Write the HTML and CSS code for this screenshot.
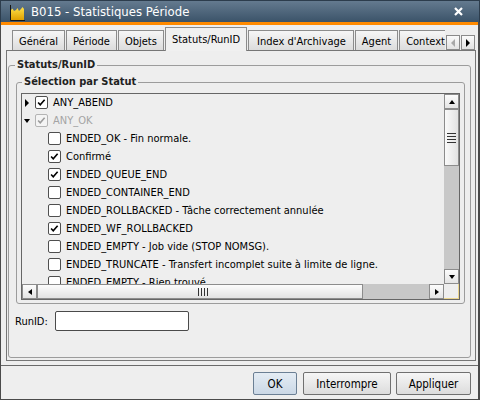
FILE: index.html
```html
<!DOCTYPE html>
<html lang="fr">
<head>
<meta charset="utf-8">
<title>B015 - Statistiques Période</title>
<link rel="stylesheet" href="styles.css">
</head>
<body>
<div class="window">
  <div class="titlebar">
    <svg class="app-icon" width="16" height="17" viewBox="0 0 16 17">
      <defs>
        <linearGradient id="gold" x1="0" y1="0" x2="0" y2="1">
          <stop offset="0" stop-color="#ffe14a"/>
          <stop offset="1" stop-color="#e0a000"/>
        </linearGradient>
      </defs>
      <path d="M2 16 L2 6 L3.5 4.5 L5 7 L7 6 L8.5 4 L10 7 L12 5 L13.5 3 L15 5 L15 16 Z" fill="url(#gold)"/>
      <path d="M1.5 1 V16.5 H16" stroke="#151515" stroke-width="1" fill="none"/>
    </svg>
    <span class="title">B015 - Statistiques Période</span>
    <svg class="close" width="9" height="9" viewBox="0 0 9 9">
      <path d="M1 1 L8 8 M8 1 L1 8" stroke="#ffffff" stroke-width="2.2"/>
    </svg>
  </div>
  <div class="frame">
    <div class="accent"></div>
    <div class="content">
      <div class="tabs">
        <div class="tab-strip">
          <div class="tab">Général</div>
          <div class="tab">Période</div>
          <div class="tab">Objets</div>
          <div class="tab active">Statuts/RunID</div>
          <div class="tab wide">Index d'Archivage</div>
          <div class="tab">Agent</div>
          <div class="tab">Contexte</div>
        </div>
        <div class="tab-arrows">
          <div class="arrow-btn"><span class="tri-left disabled"></span></div>
          <div class="arrow-btn"><span class="tri-right"></span></div>
        </div>
      </div>
      <div class="panel">
        <fieldset class="group outer">
          <legend>Statuts/RunID</legend>
          <fieldset class="group inner">
            <legend>Sélection par Statut</legend>
            <div class="listbox">
              <div class="viewport">
                <div class="row l1"><span class="toggle"><span class="tri-right"></span></span><span class="cb checked"><svg viewBox="0 0 13 13"><path d="M2.5 6.5 L5 9.2 L10.2 3.2"/></svg></span><span class="lbl">ANY_ABEND</span></div>
                <div class="row l1 disabled"><span class="toggle"><span class="tri-down"></span></span><span class="cb checked"><svg viewBox="0 0 13 13"><path d="M2.5 6.5 L5 9.2 L10.2 3.2"/></svg></span><span class="lbl">ANY_OK</span></div>
                <div class="row l2"><span class="cb"></span><span class="lbl">ENDED_OK - Fin normale.</span></div>
                <div class="row l2"><span class="cb checked"><svg viewBox="0 0 13 13"><path d="M2.5 6.5 L5 9.2 L10.2 3.2"/></svg></span><span class="lbl">Confirmé</span></div>
                <div class="row l2"><span class="cb checked"><svg viewBox="0 0 13 13"><path d="M2.5 6.5 L5 9.2 L10.2 3.2"/></svg></span><span class="lbl">ENDED_QUEUE_END</span></div>
                <div class="row l2"><span class="cb"></span><span class="lbl">ENDED_CONTAINER_END</span></div>
                <div class="row l2"><span class="cb"></span><span class="lbl">ENDED_ROLLBACKED - Tâche correctement annulée</span></div>
                <div class="row l2"><span class="cb checked"><svg viewBox="0 0 13 13"><path d="M2.5 6.5 L5 9.2 L10.2 3.2"/></svg></span><span class="lbl">ENDED_WF_ROLLBACKED</span></div>
                <div class="row l2"><span class="cb"></span><span class="lbl">ENDED_EMPTY - Job vide (STOP NOMSG).</span></div>
                <div class="row l2"><span class="cb"></span><span class="lbl">ENDED_TRUNCATE - Transfert incomplet suite à limite de ligne.</span></div>
                <div class="row l2"><span class="cb"></span><span class="lbl">ENDED_EMPTY - Rien trouvé</span></div>
                <div class="row l2"><span class="cb"></span><span class="lbl">ENDED_WARNING</span></div>
              </div>
              <div class="vscroll">
                <div class="sb-btn"><span class="tri-up"></span></div>
                <div class="vthumb"><span class="grip-h"></span></div>
                <div class="track"></div>
                <div class="sb-btn"><span class="tri-down-sm"></span></div>
              </div>
              <div class="hscroll">
                <div class="sb-btn"><span class="tri-left-sm"></span></div>
                <div class="hthumb"><span class="grip-v"></span></div>
                <div class="track"></div>
                <div class="sb-btn"><span class="tri-right-sm"></span></div>
              </div>
              <div class="corner"></div>
            </div>
          </fieldset>
          <div class="runid-row">
            <label class="runid-label" for="runid">RunID:</label>
            <input class="runid-input" id="runid" type="text">
          </div>
        </fieldset>
      </div>
      <div class="separator"></div>
      <div class="buttons">
        <button class="btn default btn-ok">OK</button>
        <button class="btn btn-cancel">Interrompre</button>
        <button class="btn btn-apply">Appliquer</button>
      </div>
    </div>
  </div>
</div>
</body>
</html>
```
FILE: styles.css
```css
* { box-sizing: border-box; }
html, body { margin: 0; padding: 0; }
body {
  width: 480px;
  height: 400px;
  overflow: hidden;
  background: #eeeeee;
  font-family: "DejaVu Sans Condensed", "DejaVu Sans", sans-serif;
  font-size: 11px;
  color: #000;
}
.window {
  width: 480px;
  height: 400px;
  display: flex;
  flex-direction: column;
  background: #eeeeee;
}
.titlebar {
  height: 22px;
  flex: none;
  display: flex;
  align-items: center;
  background: linear-gradient(#647a8f, #3b5369);
  border: 1px solid #2c3c4c;
  border-bottom: none;
  color: #fff;
  padding: 0 16px 0 8px;
}
.app-icon { margin-right: 6px; margin-top: 1px; }
.title { flex: 1; font-size: 13px; }
.close { flex: none; }
.frame {
  flex: 1;
  display: flex;
  flex-direction: column;
  border: 1px solid #4a4a4a;
  border-right-width: 2px;
  border-top: none;
}
.accent { height: 3px; flex: none; background: #ff8a00; }
.content {
  flex: 1;
  padding: 2px 2px 0 5px;
  display: flex;
  flex-direction: column;
}
/* tabs */
.tabs {
  height: 24px;
  flex: none;
  display: flex;
  align-items: flex-end;
  padding-left: 6px;
  background: linear-gradient(to top, #767676 1px, transparent 1px);
}
.tab-strip {
  width: 433px;
  height: 24px;
  display: flex;
  align-items: flex-start;
  overflow: hidden;
  flex: none;
}
.tab {
  flex: none;
  height: 20px;
  margin-top: 3px;
  margin-right: 1px;
  padding: 1px 6px 0;
  border: 1px solid #8c8c8c;
  border-bottom: none;
  background: linear-gradient(#f6f6f6, #dcdcdc);
  display: flex;
  align-items: center;
  white-space: nowrap;
}
.tab.wide { padding: 1px 7px 0 8px; }
.tab.active {
  height: 24px;
  margin-top: 0;
  background: #f0f0f0;
  padding-top: 0;
}
.tab-arrows {
  display: flex;
  gap: 1px;
  margin-left: 1px;
  margin-bottom: 1px;
}
.arrow-btn {
  width: 14px;
  height: 15px;
  border: 1px solid #8a8a8a;
  background: linear-gradient(#fafafa, #e2e2e2);
  display: flex;
  align-items: center;
  justify-content: center;
}
.tri-left { width: 0; height: 0; border-right: 4px solid #000; border-top: 4px solid transparent; border-bottom: 4px solid transparent; }
.tri-left.disabled { border-right-color: #a8a8a8; }
.tri-right { width: 0; height: 0; border-left: 4px solid #000; border-top: 4px solid transparent; border-bottom: 4px solid transparent; }
.tri-down { width: 0; height: 0; border-top: 4px solid #000; border-left: 3.5px solid transparent; border-right: 3.5px solid transparent; }
.tri-up { width: 0; height: 0; border-bottom: 4px solid #000; border-left: 3.5px solid transparent; border-right: 3.5px solid transparent; }
.tri-down-sm { width: 0; height: 0; border-top: 4px solid #000; border-left: 3.5px solid transparent; border-right: 3.5px solid transparent; }
.tri-left-sm { width: 0; height: 0; border-right: 4px solid #000; border-top: 3.5px solid transparent; border-bottom: 3.5px solid transparent; }
.tri-right-sm { width: 0; height: 0; border-left: 4px solid #000; border-top: 3.5px solid transparent; border-bottom: 3.5px solid transparent; }

/* panel */
.panel {
  flex: none;
  height: 310px;
  border: 1px solid #767676;
  border-top: none;
  padding: 7px 4px 2px 1px;
  display: flex;
  flex-direction: column;
}
.group {
  margin: 0;
  border: 1px solid #9c9c9c;
  border-radius: 3px;
  min-width: 0;
}
.group legend {
  font-weight: bold;
  font-size: 11px;
  line-height: 14px;
  padding: 0 2px;
  color: #222;
}
.outer {
  flex: 1;
  padding: 3px 5px 0 7px;
}
.outer > legend { margin-left: -1px; }
.inner {
  padding: 4px 4px 3px 4px;
}
.inner > legend { margin-left: 1px; }

/* listbox */
.listbox {
  height: 207px;
  border: 1px solid #666666;
  display: grid;
  grid-template-columns: 1fr 15px;
  grid-template-rows: 1fr 15px;
  background: #eeeeee;
}
.viewport {
  overflow: hidden;
  padding-top: 1px;
  min-width: 0;
}
.row {
  height: 18px;
  display: flex;
  align-items: center;
  white-space: nowrap;
  padding-bottom: 3px;
}
.row.l1 { padding-left: 2px; }
.row.l2 { padding-left: 26px; }
.toggle {
  width: 11px;
  height: 13px;
  display: flex;
  align-items: center;
  justify-content: flex-start;
  padding-left: 1px;
}
.row.disabled .toggle { padding-left: 0; }
.cb {
  width: 13px;
  height: 13px;
  flex: none;
  border: 1px solid #4f4f4f;
  border-radius: 2px;
  background: #ffffff;
  margin-right: 5px;
  display: flex;
}
.cb svg { width: 11px; height: 11px; }
.cb path { fill: none; stroke: #000; stroke-width: 1.9; }
.lbl { line-height: 13px; }
.row.disabled .cb { border-color: #b4b4b4; background: #f4f4f4; }
.row.disabled .cb path { stroke: #9c9c9c; }
.row.disabled .lbl { color: #a4a4a4; }

.vscroll {
  display: flex;
  flex-direction: column;
  background: #c8c8c8;
}
.hscroll {
  display: flex;
  background: #c8c8c8;
}
.sb-btn {
  width: 15px;
  height: 15px;
  flex: none;
  border: 1px solid #8c8c8c;
  background: linear-gradient(#fcfcfc, #e4e4e4);
  display: flex;
  align-items: center;
  justify-content: center;
}
.vthumb {
  height: 57px;
  flex: none;
  border: 1px solid #8c8c8c;
  background: linear-gradient(to right, #fafafa, #e2e2e2);
  display: flex;
  align-items: center;
  justify-content: center;
}
.grip-h {
  width: 9px;
  height: 10px;
  background: repeating-linear-gradient(#333 0 1px, transparent 1px 3px);
}
.hthumb {
  width: 326px;
  flex: none;
  border: 1px solid #8c8c8c;
  background: linear-gradient(#fcfcfc, #e2e2e2);
  display: flex;
  align-items: center;
  justify-content: center;
}
.grip-v {
  width: 10px;
  height: 8px;
  background: repeating-linear-gradient(to right, #333 0 1px, transparent 1px 3px);
  margin-left: 6px;
}
.track { flex: 1; }
.corner {
  background: #eeeeee;
  border-right: 1px solid #e9d48c;
  border-bottom: 1px solid #e9d48c;
}

/* RunID */
.runid-row {
  display: flex;
  align-items: center;
  margin: 7px 0 0 -1px;
}
.runid-label { width: 40px; }
.runid-input {
  width: 134px;
  height: 20px;
  border: 1px solid #4a4a4a;
  border-radius: 2px;
  background: #fff;
  margin: 0;
  padding: 0 3px;
  font: inherit;
}

/* footer */
.separator {
  height: 1px;
  flex: none;
  background: #6a6a6a;
  margin: 4px -2px 0 -5px;
}
.buttons {
  display: flex;
  justify-content: flex-end;
  gap: 5px;
  margin-top: 6px;
  padding-right: 5px;
}
.btn {
  height: 23px;
  margin: 0;
  padding: 0;
  border: 1px solid #707070;
  border-radius: 2px;
  background: linear-gradient(#f6f6f6, #dcdcdc);
  font-family: inherit;
  font-size: 11.5px;
  color: #000;
}
.btn.default {
  border-color: #6b7f94;
  background: linear-gradient(#e4ecf4, #cbd8e6);
}
.btn-ok { width: 44px; margin-right: 1px; }
.btn-cancel { width: 88px; }
.btn-apply { width: 75px; }
```
